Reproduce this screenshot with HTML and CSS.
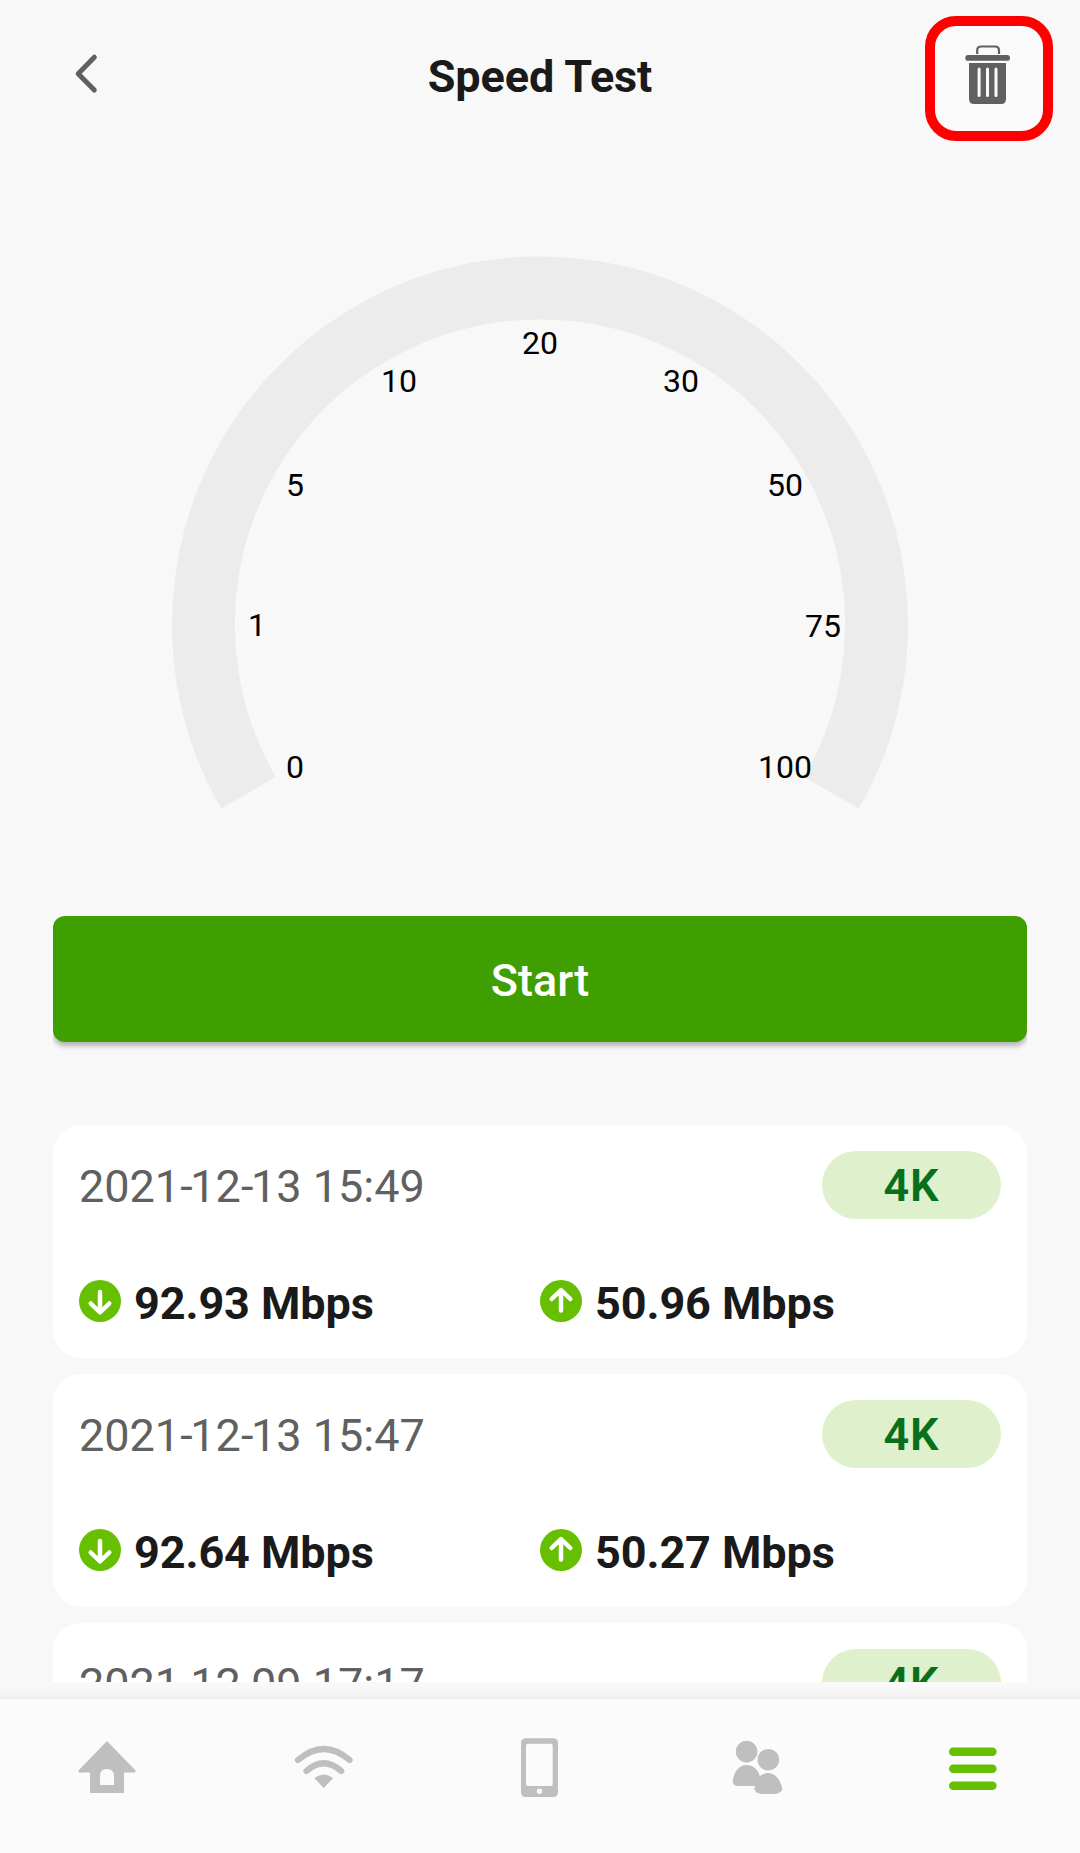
FILE: index.html
```html
<!DOCTYPE html>
<html lang="en">
<head>
<meta charset="utf-8">
<title>Speed Test</title>
<link rel="stylesheet" href="styles.css">
</head>
<body>
<div class="app">
  <header class="header">
    <button class="back" aria-label="Back">
      <svg width="24" height="40" viewBox="0 0 24 40"><path d="M20.3 4.2 4.2 20.800 20.3 37" class="back-stroke"/></svg>
    </button>
    <h1 class="title">Speed Test</h1>
    <button class="delete" aria-label="Delete history">
      <svg width="46" height="60" viewBox="0 0 46 60">
        <path d="M12.200 9V5.500Q12.200 1.500 16.200 1.500H30Q34 1.500 34 5.500V9" fill="none" stroke="#606060" stroke-width="2.200"/>
        <rect x="0.300" y="10" width="44.700" height="5.800" rx="2.900"/>
        <path d="M4 18H41V54Q41 59 36 59H9Q4 59 4 54Z"/>
        <path class="slots" d="M14.100 24V50.500M22.500 24V50.500M31 24V50.500"/>
      </svg>
    </button>
  </header>

  <main class="content">
    <svg class="gauge" width="740" height="560" viewBox="170 254 740 560">
      <path class="track" d="M248.580 792.750A336.500 336.500 0 1 1 831.420 792.750"/>
      <g class="ticks">
        <text x="295" y="778">0</text>
        <text x="257" y="636">1</text>
        <text x="295" y="496">5</text>
        <text x="399" y="392">10</text>
        <text x="540" y="354">20</text>
        <text x="681" y="392">30</text>
        <text x="785" y="496">50</text>
        <text x="823" y="637">75</text>
        <text x="785" y="778">100</text>
      </g>
    </svg>
    <div class="start-wrap"><button class="start">Start</button></div>

    <section class="history">
      <article class="card">
        <div class="row"><time class="date">2021<span class="dash">-</span>12<span class="dash">-</span>13 15:49</time><span class="badge">4K</span></div>
        <div class="speeds">
          <div class="speed"><svg class="dir" viewBox="0 0 42 42"><circle cx="21" cy="21" r="21"/><path d="M21 12V31.500M11.700 23.500 21 32.500 30.300 23.500"/></svg>92.93 Mbps</div>
          <div class="speed"><svg class="dir" viewBox="0 0 42 42"><circle cx="21" cy="21" r="21"/><path d="M21 30.500V11M11.700 19 21 10 30.300 19"/></svg>50.96 Mbps</div>
        </div>
      </article>
      <article class="card">
        <div class="row"><time class="date">2021<span class="dash">-</span>12<span class="dash">-</span>13 15:47</time><span class="badge">4K</span></div>
        <div class="speeds">
          <div class="speed"><svg class="dir" viewBox="0 0 42 42"><circle cx="21" cy="21" r="21"/><path d="M21 12V31.500M11.700 23.500 21 32.500 30.300 23.500"/></svg>92.64 Mbps</div>
          <div class="speed"><svg class="dir" viewBox="0 0 42 42"><circle cx="21" cy="21" r="21"/><path d="M21 30.500V11M11.700 19 21 10 30.300 19"/></svg>50.27 Mbps</div>
        </div>
      </article>
      <article class="card">
        <div class="row"><time class="date">2021<span class="dash">-</span>12<span class="dash">-</span>09 17:17</time><span class="badge">4K</span></div>
      </article>
    </section>
  </main>

  <div class="nav-shadow"></div>
  <nav class="nav">
    <a class="tab"><svg width="60" height="60" viewBox="0 0 60 60"><path fill-rule="evenodd" d="M30 2 58.500 31.500Q59 33.500 57 33.500H47V54H13V33.500H3Q1 33.500 1.500 31.500ZM23 46H37V37Q37 30 30 30T23 37Z"/></svg></a>
    <a class="tab"><svg width="60" height="60" viewBox="0 0 60 60"><path class="line" d="M4 21Q29.800-1 55.600 21M12.500 32Q29.800 16.500 47.200 32"/><path d="M20.200 39Q29.700 32 39.200 39L29.700 49Z"/></svg></a>
    <a class="tab"><svg width="60" height="60" viewBox="0 0 60 60"><path fill-rule="evenodd" d="M16-.7H43Q48-.7 48 4V53Q48 58 43 58H16Q11 58 11 53V4Q11-.7 16-.7ZM18 4.700Q16 4.700 16 6.700V45Q16 47 18 47H40.700Q42.700 47 42.700 45V6.700Q42.700 4.700 40.700 4.700ZM29.500 49.500A2.700 2.700 0 1 0 29.500 54.900A2.700 2.700 0 1 0 29.500 49.500Z"/></svg></a>
    <a class="tab"><svg width="60" height="60" viewBox="0 0 60 60"><circle cx="19.600" cy="12.600" r="10.800"/><circle cx="41.300" cy="20.700" r="10.800"/><path d="M5.800 42.500C6 35 11 26 19.600 26C27 26 32 32 33 38.500L30 47H12Q5.800 47 5.800 42.500Z"/><path d="M27.500 50.500L28.500 43C31 38.500 35 34 41.300 34C49 34 54.500 43 55.300 50.500Q54 53.500 49 55H34Q28.500 54 27.500 50.500Z"/></svg></a>
    <a class="tab active"><svg width="60" height="60" viewBox="0 0 60 60"><rect x="6" y="8.400" width="47.600" height="8.500" rx="4.250"/><rect x="6" y="25.500" width="47.600" height="8.500" rx="4.250"/><rect x="6" y="42.600" width="47.600" height="8.500" rx="4.250"/></svg></a>
  </nav>
</div>
</body>
</html>
```
FILE: styles.css
```css
* { box-sizing: border-box; }
body { margin: 0; font-family: Roboto, "Liberation Sans", sans-serif; background: #f8f8f8; color: #1a1a1a; }
button { border: 0; padding: 0; background: none; font: inherit; color: inherit; }
svg { display: block; flex: none; overflow: visible; }

.app { display: flex; flex-direction: column; width: 1080px; height: 1853px; overflow: hidden; }

.header { display: grid; grid-template-columns: 130px 1fr 130px; align-items: start; height: 254px; padding: 16px 26px 0; flex: none; }
.back { padding: 37px 0 0 48px; }
.back-stroke { fill: none; stroke: #606060; stroke-width: 5; stroke-linecap: round; stroke-linejoin: round; }
.title { margin: 0; padding-top: 34px; text-align: center; font-size: 45px; line-height: 53px; font-weight: 700; letter-spacing: -.1px; }
.delete { display: flex; align-items: flex-start; justify-self: end; width: 128px; height: 125px; margin-right: 1px; border: 10px solid #fe0000; border-radius: 31px; padding: 19px 0 0 30px; background: #fafafa; }
.delete svg { fill: #606060; }
.delete .slots { fill: none; stroke: #fafafa; stroke-width: 3; stroke-linecap: round; }

.content { display: flex; flex-direction: column; align-items: center; height: 1428px; overflow: hidden; flex: none; padding: 0 53px; }
.gauge { margin-bottom: 102px; }
.track { fill: none; stroke: #ececec; stroke-width: 63; }
.ticks { font-size: 32px; fill: #000; text-anchor: middle; }

.start-wrap { width: 974px; height: 140px; overflow: hidden; flex: none; margin-bottom: 69px; }
.start { display: block; width: 974px; height: 126px; border-radius: 12px; background: #3f9e00; color: #fff; font-size: 45px; font-weight: 500; line-height: 130px; box-shadow: 0 4px 5px rgba(0, 0, 0, .27); }

.history { display: flex; flex-direction: column; gap: 16px; width: 974px; flex: none; }
.card { height: 233px; padding: 26px; border-radius: 28px; background: #fff; }
.row { display: flex; justify-content: space-between; align-items: center; height: 68px; }
.date { font-size: 45px; line-height: 68px; padding-top: 3px; color: #606060; }
.dash { letter-spacing: -2.300px; }
.badge { width: 179px; height: 68px; border-radius: 34px; background: #dff1cc; color: #08701b; font-size: 45px; font-weight: 600; line-height: 70px; letter-spacing: 1px; text-align: center; }
.speeds { display: grid; grid-template-columns: 461px 461px; margin-top: 58px; }
.speed { display: flex; align-items: center; gap: 13px; height: 53px; font-size: 45px; line-height: 53px; font-weight: 700; letter-spacing: -.1px; }
.dir { width: 42px; height: 42px; margin-top: -5px; fill: #66bf00; }
.dir path { fill: none; stroke: #fff; stroke-width: 4.500; stroke-linecap: round; stroke-linejoin: round; }

.nav-shadow { height: 17px; flex: none; background: linear-gradient(#fafafa, #f6f6f6 60%, #eee); }
.nav { display: grid; grid-template-columns: repeat(5, 216.500px); height: 154px; background: #fbfbfb; margin-left: -1px; padding-top: 40px; flex: none; }
.tab { display: flex; justify-content: center; fill: #bfbfbf; }
.tab .line { fill: none; stroke: #bfbfbf; stroke-width: 6.200; stroke-linecap: round; }
.tab.active { fill: #66bf00; }
```
